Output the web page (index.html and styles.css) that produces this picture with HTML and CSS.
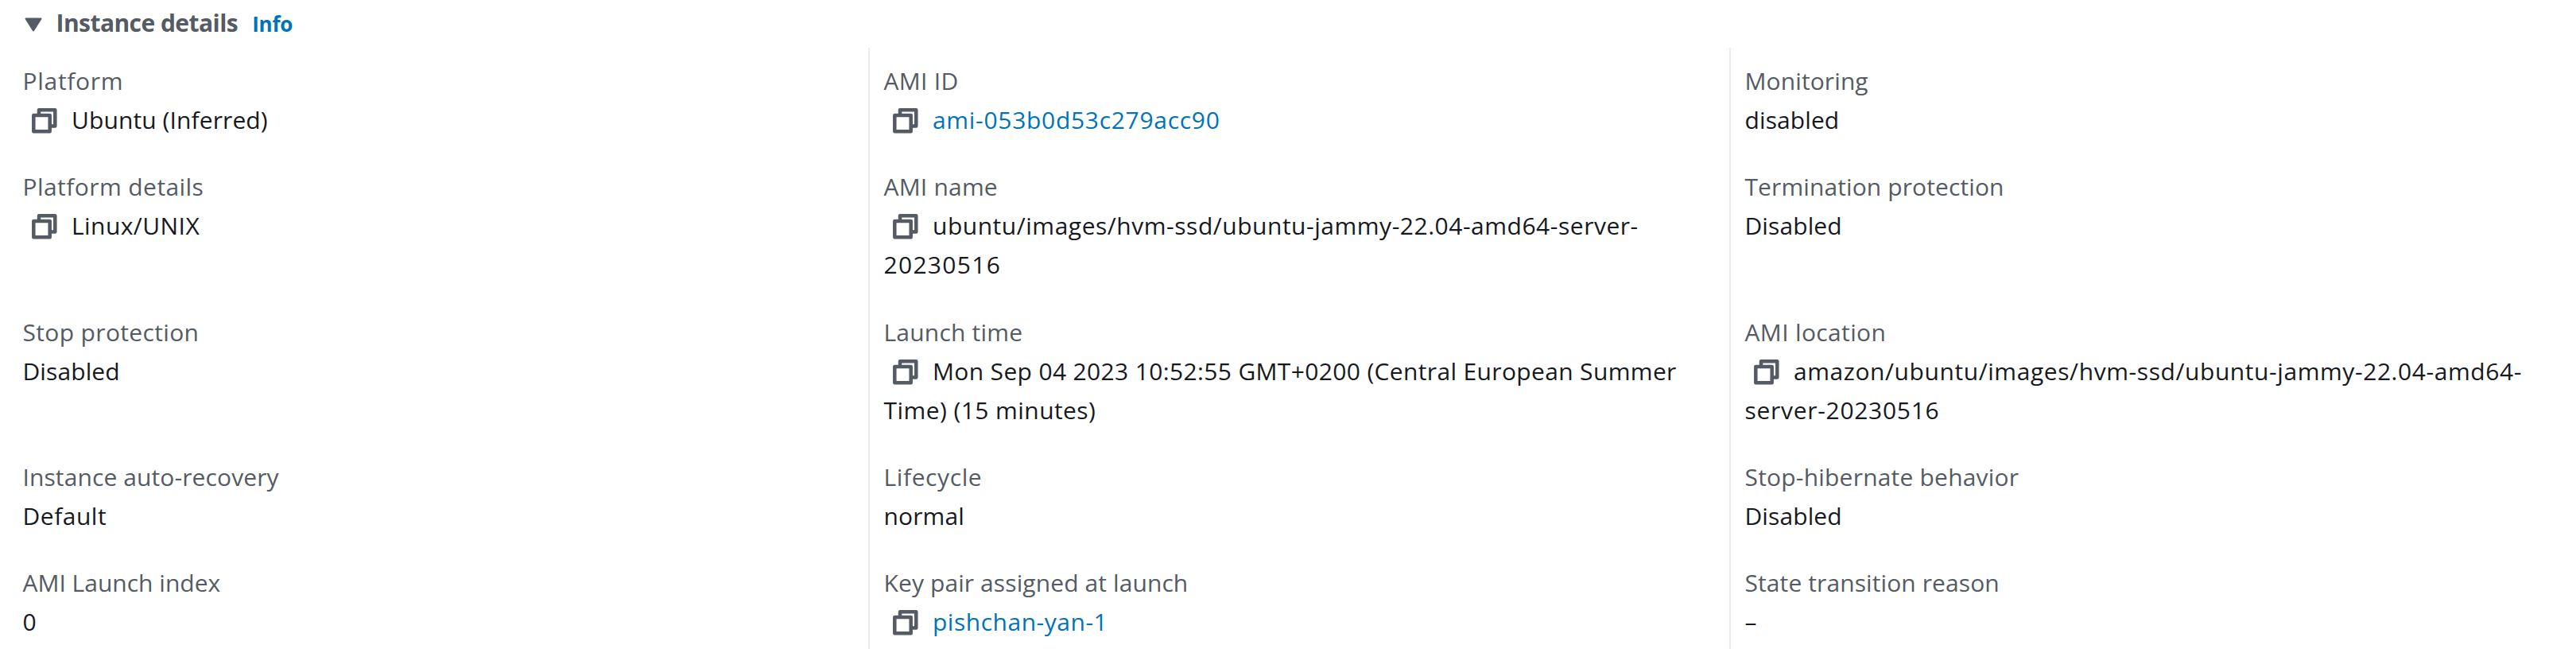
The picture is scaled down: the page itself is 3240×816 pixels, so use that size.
FILE: index.html
```html
<!DOCTYPE html>
<html lang="en">
<head>
<meta charset="utf-8">
<title>Instance details</title>
<link rel="stylesheet" href="styles.css">
</head>
<body>
<svg class="defs" aria-hidden="true">
  <symbol id="copy" viewBox="0 0 32 32">
    <path d="M9 8V2.300H29.300V22.500H24" />
    <path d="M2.300 9H22.700V29.300H2.300Z" />
  </symbol>
</svg>
<section class="panel">
  <header class="header">
    <svg class="caret" viewBox="0 0 22 18"><path d="M1.500 1.500H20.500L11 16.500Z" /></svg>
    <h2 class="title">Instance details</h2>
    <a class="info">Info</a>
  </header>
  <div class="grid">
    <div class="cell">
      <div class="label s7">Platform</div>
      <div class="value s1"><svg class="copy"><use href="#copy" /></svg>Ubuntu (Inferred)</div>
    </div>
    <div class="cell">
      <div class="label s3">AMI ID</div>
      <div class="value s7"><svg class="copy"><use href="#copy" /></svg><a class="link">ami-053b0d53c279acc90</a></div>
    </div>
    <div class="cell">
      <div class="label s1">Monitoring</div>
      <div class="value s1">disabled</div>
    </div>

    <div class="cell">
      <div class="label s4">Platform details</div>
      <div class="value s4"><svg class="copy"><use href="#copy" /></svg>Linux/UNIX</div>
    </div>
    <div class="cell">
      <div class="label s2">AMI name</div>
      <div class="value s5"><svg class="copy"><use href="#copy" /></svg>ubuntu/images/hvm-ssd/ubuntu-jammy-22.04-amd64-server-<wbr><span class="s13">20230516</span></div>
    </div>
    <div class="cell">
      <div class="label s1">Termination protection</div>
      <div class="value s1">Disabled</div>
    </div>

    <div class="cell">
      <div class="label s35">Stop protection</div>
      <div class="value s1">Disabled</div>
    </div>
    <div class="cell">
      <div class="label s2">Launch time</div>
      <div class="value s35"><svg class="copy"><use href="#copy" /></svg>Mon Sep 04 2023 10:52:55 GMT+0200 (Central European Summer <span class="s4">Time) (15 minutes)</span></div>
    </div>
    <div class="cell">
      <div class="label s35">AMI location</div>
      <div class="value s55"><svg class="copy"><use href="#copy" /></svg>amazon/ubuntu/images/hvm-ssd/ubuntu-jammy-22.04-amd64-<wbr><span class="s7">server-20230516</span></div>
    </div>

    <div class="cell">
      <div class="label s1">Instance auto-recovery</div>
      <div class="value s5">Default</div>
    </div>
    <div class="cell">
      <div class="label s6">Lifecycle</div>
      <div class="value s1">normal</div>
    </div>
    <div class="cell">
      <div class="label s2">Stop-hibernate behavior</div>
      <div class="value s1">Disabled</div>
    </div>

    <div class="cell">
      <div class="label">AMI Launch index</div>
      <div class="value">0</div>
    </div>
    <div class="cell">
      <div class="label s1">Key pair assigned at launch</div>
      <div class="value s5"><svg class="copy"><use href="#copy" /></svg><a class="link">pishchan-yan-1</a></div>
    </div>
    <div class="cell">
      <div class="label s1">State transition reason</div>
      <div class="value">–</div>
    </div>
  </div>
</section>
</body>
</html>
```
FILE: styles.css
```css
body {
  margin: 0;
  background: #fff;
  color: #16191f;
  font: 30px/49px "Open Sans", "Noto Sans", sans-serif;
  overflow: hidden;
}

.defs {
  display: block;
  width: 0;
  height: 0;
}

.panel {
  height: 816px;
  overflow: hidden;
}

.header {
  display: flex;
  align-items: baseline;
  height: 56px;
  padding: 4px 0 0 31px;
  box-sizing: border-box;
  margin-bottom: 4px;
}

.caret {
  width: 22px;
  height: 18px;
  margin-right: 17.500px;
  fill: #545b64;
  stroke: #545b64;
  stroke-width: 2;
  stroke-linejoin: round;
}

.title {
  margin: 0;
  color: #545b64;
  font-size: 30px;
  font-weight: 700;
  letter-spacing: -0.55px;
}

.info {
  margin-left: 18px;
  color: #0073bb;
  font-size: 26px;
  font-weight: 700;
  letter-spacing: -0.2px;
}

.grid {
  display: grid;
  grid-template-columns: 1092px 1083px 1065px;
  grid-template-rows: 133px 183px 182px 133px 133px;
}

.cell {
  box-sizing: border-box;
  padding: 17px 18px 0 17.500px;
  border-left: 2px solid #eaeded;
}

.cell:nth-child(3n + 1) {
  padding-left: 28.500px;
  border-left: 0;
}

.label {
  color: #545b64;
}

.link {
  color: #0073bb;
}

.copy {
  width: 32px;
  height: 32px;
  margin: 0 18.300px 0 11.200px;
  vertical-align: -6px;
  fill: none;
  stroke: #545b64;
  stroke-width: 4.500;
  stroke-linejoin: round;
}

/* Tracking steps */
.s1 { letter-spacing: 0.1px; }
.s2 { letter-spacing: 0.2px; }
.s3 { letter-spacing: 0.3px; }
.s35 { letter-spacing: 0.35px; }
.s4 { letter-spacing: 0.43px; }
.s5 { letter-spacing: 0.52px; }
.s55 { letter-spacing: 0.57px; }
.s6 { letter-spacing: 0.6px; }
.s7 { letter-spacing: 0.7px; }
.s13 { letter-spacing: 1.3px; }
```
